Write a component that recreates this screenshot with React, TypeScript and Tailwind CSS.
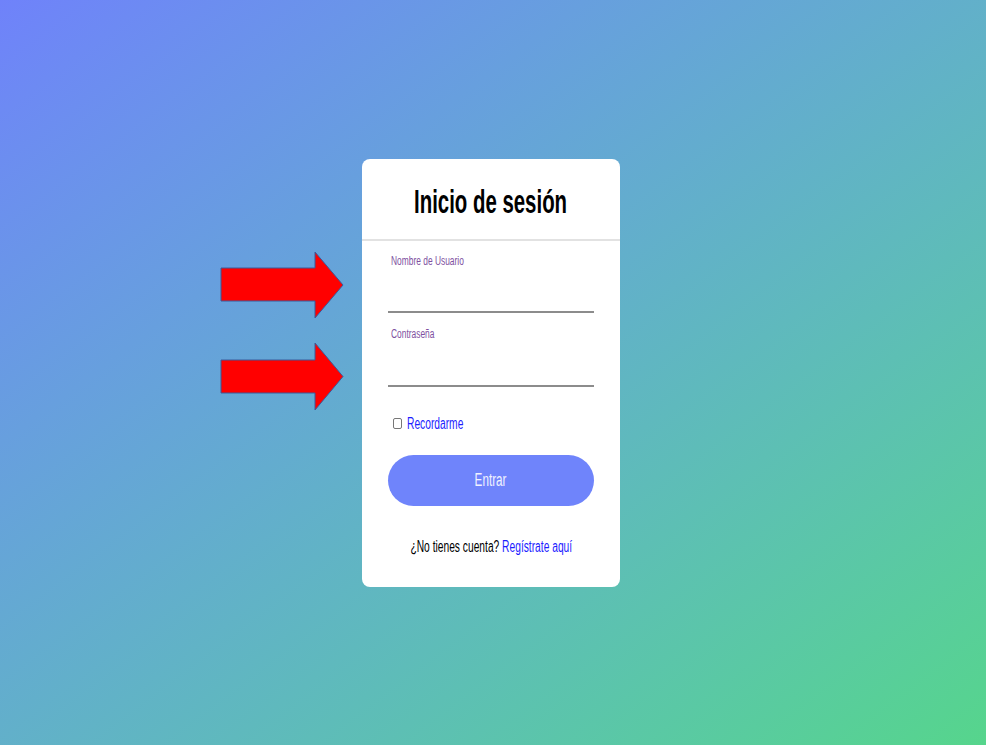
export default function App() {
  const font = { fontFamily: '"Liberation Sans", Arial, sans-serif' };
  return (
    <div
      className="relative w-full h-screen flex items-center justify-center bg-gradient-to-br from-[#6f82fa] to-[#56d58c]"
      style={font}
    >
      <div className="w-[258px] bg-white rounded-[8px] mr-[4px]">
        <div className="h-[82px] pt-[4px] flex items-center justify-center border-b-2 border-[#e2e2e2]">
          <h1 className="inline-block whitespace-nowrap scale-x-[0.6] text-[34px] font-bold text-black leading-none">
            Inicio de sesión
          </h1>
        </div>

        <form className="px-[26px] pt-[13px] pb-[32px] flex flex-col">
          <label className="pl-[3px] text-[12px] leading-[14px] text-[#7e50a0]">
            <span className="inline-block origin-left scale-x-[0.7] whitespace-nowrap">Nombre de Usuario</span>
          </label>
          <input type="text" className="h-[45px] border-b-2 border-[#8c8c8c] outline-none bg-transparent" />

          <label className="mt-[14px] pl-[3px] text-[12px] leading-[14px] text-[#7e50a0]">
            <span className="inline-block origin-left scale-x-[0.7] whitespace-nowrap">Contraseña</span>
          </label>
          <input type="password" className="h-[46px] border-b-2 border-[#8c8c8c] outline-none bg-transparent" />

          <div className="mt-[29px] h-[16px] pl-[5px] flex items-center gap-[5px]">
            <span className="w-[9px] h-[11px] border border-[#777] rounded-[2px] bg-white" />
            <span className="inline-block origin-left scale-x-[0.64] whitespace-nowrap text-[16px] leading-none text-[#1c1cff]">
              Recordarme
            </span>
          </div>

          <button
            type="button"
            className="mt-[23px] h-[51px] rounded-full bg-[#6f84fb] text-[#f1f2ff] text-[18px]"
          >
            <span className="inline-block scale-x-[0.65]">Entrar</span>
          </button>

          <div className="mt-[33px] h-[16px] flex justify-center">
            <p className="inline-block whitespace-nowrap scale-x-[0.64] text-[16px] leading-none text-black">
              ¿No tienes cuenta? <span className="text-[#1c1cff]">Regístrate aquí</span>
            </p>
          </div>
        </form>
      </div>

      <svg className="absolute inset-0 pointer-events-none" width="986" height="745" viewBox="0 0 986 745">
        <polygon
          points="221,268 315,268 315,252 343,285 315,318 315,301 221,301"
          fill="#ff0000"
          stroke="#3b5a9a"
          strokeWidth="1"
        />
        <polygon
          points="221,360 315,360 315,343 343,376.5 315,410 315,393 221,393"
          fill="#ff0000"
          stroke="#3b5a9a"
          strokeWidth="1"
        />
      </svg>
    </div>
  );
}
